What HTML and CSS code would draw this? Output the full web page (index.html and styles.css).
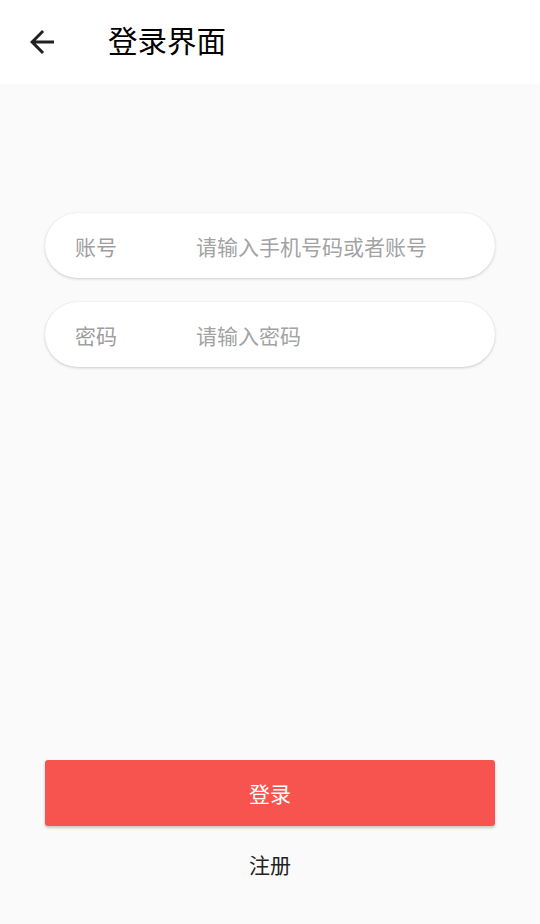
FILE: index.html
```html
<!DOCTYPE html>
<html lang="zh-CN">
<head>
    <meta charset="UTF-8">
    <meta name="viewport" content="width=device-width, initial-scale=1.0">
    <title>登录界面</title>
    <link rel="stylesheet" href="styles.css">
</head>
<body>
    <div class="page">
        <header class="app-bar">
            <button class="back-button" aria-label="返回">
                <svg viewBox="0 0 24 24" width="36" height="36">
                    <path d="M20 11H7.83l5.59-5.59L12 4l-8 8 8 8 1.41-1.41L7.83 13H20v-2z" fill="#212121"/>
                </svg>
            </button>
            <h1 class="title">登录界面</h1>
        </header>

        <main class="content">
            <div class="form">
                <label class="field">
                    <span class="field-label">账号</span>
                    <input type="text" class="field-input" placeholder="请输入手机号码或者账号">
                </label>
                <label class="field">
                    <span class="field-label">密码</span>
                    <input type="password" class="field-input" placeholder="请输入密码">
                </label>
            </div>

            <div class="actions">
                <button class="login-button">登录</button>
                <button class="register-button">注册</button>
            </div>
        </main>
    </div>
</body>
</html>
```

FILE: styles.css
```css
* {
    box-sizing: border-box;
}
body {
    margin: 0;
    padding: 0;
    background-color: #fafafa;
    font-family: "Noto Sans CJK SC", "Noto Sans", sans-serif;
}
.page {
    display: flex;
    flex-direction: column;
    height: 924px;
}
.app-bar {
    display: flex;
    align-items: center;
    height: 84px;
    flex-shrink: 0;
    background-color: #fff;
}
.back-button {
    display: flex;
    align-items: center;
    justify-content: center;
    width: 36px;
    height: 36px;
    margin-left: 24px;
    padding: 0;
    border: none;
    background: none;
}
.title {
    margin: 0 0 0 48px;
    padding-bottom: 5px;
    font-size: 29.5px;
    font-weight: 400;
    color: #000;
    line-height: 1;
}
.content {
    flex: 1;
    display: flex;
    flex-direction: column;
    padding: 129px 45px 0;
}
.form {
    display: flex;
    flex-direction: column;
    gap: 24px;
}
.field {
    display: flex;
    align-items: center;
    height: 65px;
    padding: 0 30px;
    background-color: #fff;
    border-radius: 33px;
    box-shadow: 0 1px 3px rgba(0, 0, 0, 0.18), 0 0 1px rgba(0, 0, 0, 0.08);
}
.field-label {
    width: 121px;
    flex-shrink: 0;
    font-size: 21px;
    color: #9e9e9e;
}
.field-input {
    flex: 1;
    min-width: 0;
    border: none;
    outline: none;
    background: none;
    padding: 0;
    font-family: inherit;
    font-size: 21px;
    color: #333;
}
.field-input::placeholder {
    color: #a3a3a3;
}
.actions {
    margin-top: auto;
    display: flex;
    flex-direction: column;
    padding-bottom: 33px;
}
.login-button {
    height: 66px;
    border: none;
    border-radius: 3px;
    background-color: #f75450;
    color: #fff;
    font-family: inherit;
    font-size: 21px;
    padding-bottom: 2px;
    box-shadow: 0 2px 3px rgba(0, 0, 0, 0.2);
}
.register-button {
    align-self: center;
    height: 54px;
    margin-top: 11px;
    padding: 0 20px;
    border: none;
    background: none;
    font-family: inherit;
    font-size: 21px;
    color: #222;
}
```
